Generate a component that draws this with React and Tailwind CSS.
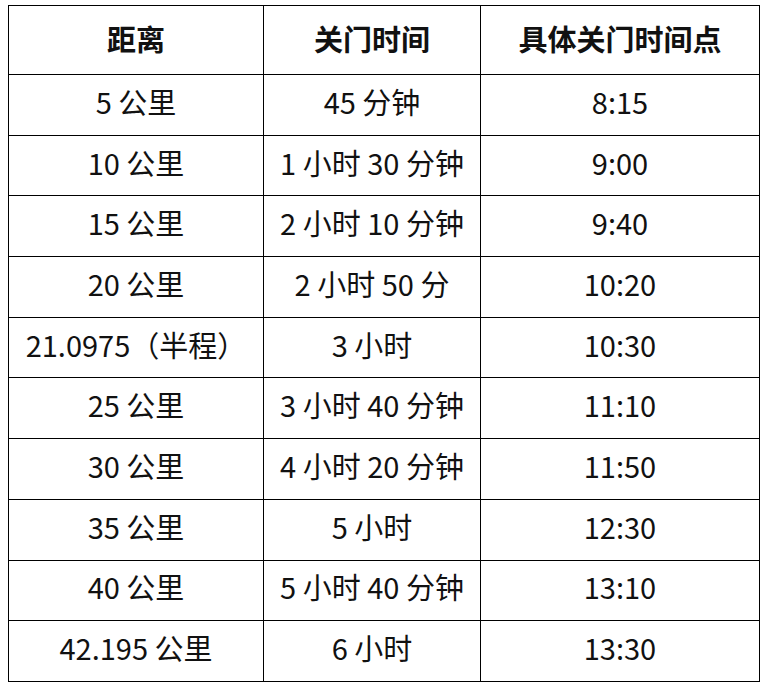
const rows = [
  ['5 公里', '45 分钟', '8:15'],
  ['10 公里', '1 小时 30 分钟', '9:00'],
  ['15 公里', '2 小时 10 分钟', '9:40'],
  ['20 公里', '2 小时 50 分', '10:20'],
  ['21.0975（半程）', '3 小时', '10:30'],
  ['25 公里', '3 小时 40 分钟', '11:10'],
  ['30 公里', '4 小时 20 分钟', '11:50'],
  ['35 公里', '5 小时', '12:30'],
  ['40 公里', '5 小时 40 分钟', '13:10'],
  ['42.195 公里', '6 小时', '13:30'],
]

export default function App() {
  return (
    <div className="w-[768px] h-[687px] bg-white pl-2 pt-[5px] font-['Noto_Sans_CJK_SC','Noto_Sans',sans-serif] text-[#111]">
      <table className="border-collapse table-fixed w-[751px] text-[29px] leading-none">
        <colgroup>
          <col className="w-[255px]" />
          <col className="w-[217px]" />
          <col className="w-[279px]" />
        </colgroup>
        <thead>
          <tr className="h-[69px]">
            {['距离', '关门时间', '具体关门时间点'].map(h => (
              <th key={h} className="border border-black text-center align-middle font-bold pb-[4px]">{h}</th>
            ))}
          </tr>
        </thead>
        <tbody>
          {rows.map((r, i) => (
            <tr key={i} className="h-[60.7px]">
              {r.map((c, j) => (
                <td key={j} className="border border-black text-center align-middle whitespace-nowrap pb-[7px]">{c}</td>
              ))}
            </tr>
          ))}
        </tbody>
      </table>
    </div>
  )
}
